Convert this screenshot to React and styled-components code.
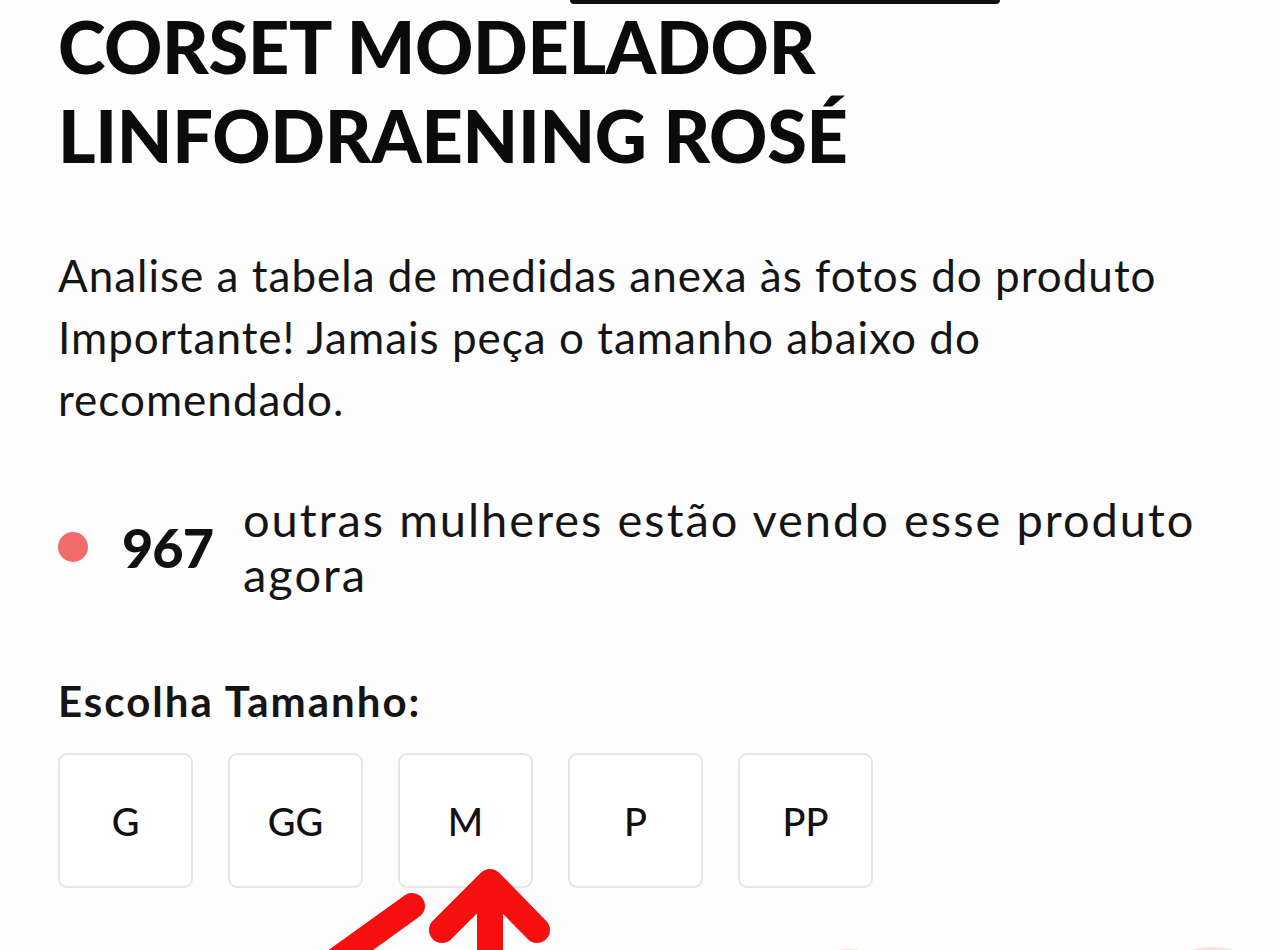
import React from 'react';
import styled, { createGlobalStyle } from 'styled-components';

const GlobalStyle = createGlobalStyle`
	html, body {
		margin: 0;
		padding: 0;
		background: #fdfdfd;
	}
	body {
		font-family: "Lato", "Liberation Sans", sans-serif;
		color: #111;
	}
`;

const Page = styled.div`
	position: relative;
	width: 1280px;
	height: 950px;
	overflow: hidden;
	box-sizing: border-box;
	padding: 0 58px;
`;

const TopPill = styled.div`
	width: 430px;
	height: 4px;
	margin-left: 512px;
	background: #111;
	border-radius: 0 0 20px 20px;
`;

const Title = styled.h1`
	margin: -2px 0 0;
	font-family: "Lato", sans-serif;
	font-weight: 900;
	font-size: 72px;
	line-height: 89px;
	letter-spacing: -0.3px;
	text-transform: uppercase;
	color: #0b0b0b;
`;

const Description = styled.p`
	margin: 64px 0 0;
	font-size: 44px;
	line-height: 62px;
	letter-spacing: 1px;
	font-weight: 400;
	color: #151515;
`;

const Viewers = styled.div`
	display: flex;
	align-items: center;
	margin-top: 62px;
`;

const Dot = styled.span`
	flex: none;
	width: 30px;
	height: 30px;
	border-radius: 50%;
	background: #f26b6b;
	margin: 0 34px 0 0;
`;

const Count = styled.strong`
	flex: none;
	font-size: 54px;
	font-weight: 900;
	margin-right: 30px;
	letter-spacing: -1px;
`;

const ViewersText = styled.span`
	font-size: 47px;
	line-height: 55px;
	letter-spacing: 2px;
	color: #151515;
`;

const Label = styled.div`
	margin-top: 74px;
	font-size: 42px;
	font-weight: 700;
	letter-spacing: 2px;
	color: #151515;
`;

const Sizes = styled.div`
	display: flex;
	gap: 35px;
	margin-top: 27px;
`;

const SizeButton = styled.button`
	width: 135px;
	height: 135px;
	box-sizing: border-box;
	border: 2px solid #e6e6e6;
	border-radius: 9px;
	background: #fff;
	font-family: "Lato", sans-serif;
	font-size: 38px;
	font-weight: 500;
	color: #111;
	padding: 0;
	cursor: pointer;
`;

const Arrows = styled.svg`
	position: absolute;
	left: 0;
	top: 0;
	width: 1280px;
	height: 950px;
	pointer-events: none;
`;

const sizes = ['G', 'GG', 'M', 'P', 'PP'];

export default function App() {
	return (
		<>
			<GlobalStyle />
			<Page>
				<TopPill />
				<Title>
					Corset Modelador
					<br />
					Linfodraening Rosé
				</Title>
				<Description>
					Analise a tabela de medidas anexa às fotos do produto
					<br />
					Importante! Jamais peça o tamanho abaixo do
					<br />
					recomendado.
				</Description>
				<Viewers>
					<Dot />
					<Count>967</Count>
					<ViewersText>
						outras mulheres estão vendo esse produto
						<br />
						agora
					</ViewersText>
				</Viewers>
				<Label>Escolha Tamanho:</Label>
				<Sizes>
					{sizes.map((s) => (
						<SizeButton key={s}>{s}</SizeButton>
					))}
				</Sizes>
				{/* red marker strokes pointing at the size row */}
				<Arrows viewBox="0 0 1280 950">
					<g stroke="#f50f0f" strokeWidth="26" strokeLinecap="round" strokeLinejoin="round" fill="none">
						<line x1="412" y1="906" x2="330" y2="965" />
						<line x1="490" y1="885" x2="490" y2="970" />
						<polyline points="442,930 490,882 537,930" />
					</g>
					<g fill="#f44" opacity="0.15">
						<ellipse cx="1213" cy="952" rx="22" ry="5" />
						<ellipse cx="850" cy="952" rx="14" ry="3" />
					</g>
				</Arrows>
			</Page>
		</>
	);
}
